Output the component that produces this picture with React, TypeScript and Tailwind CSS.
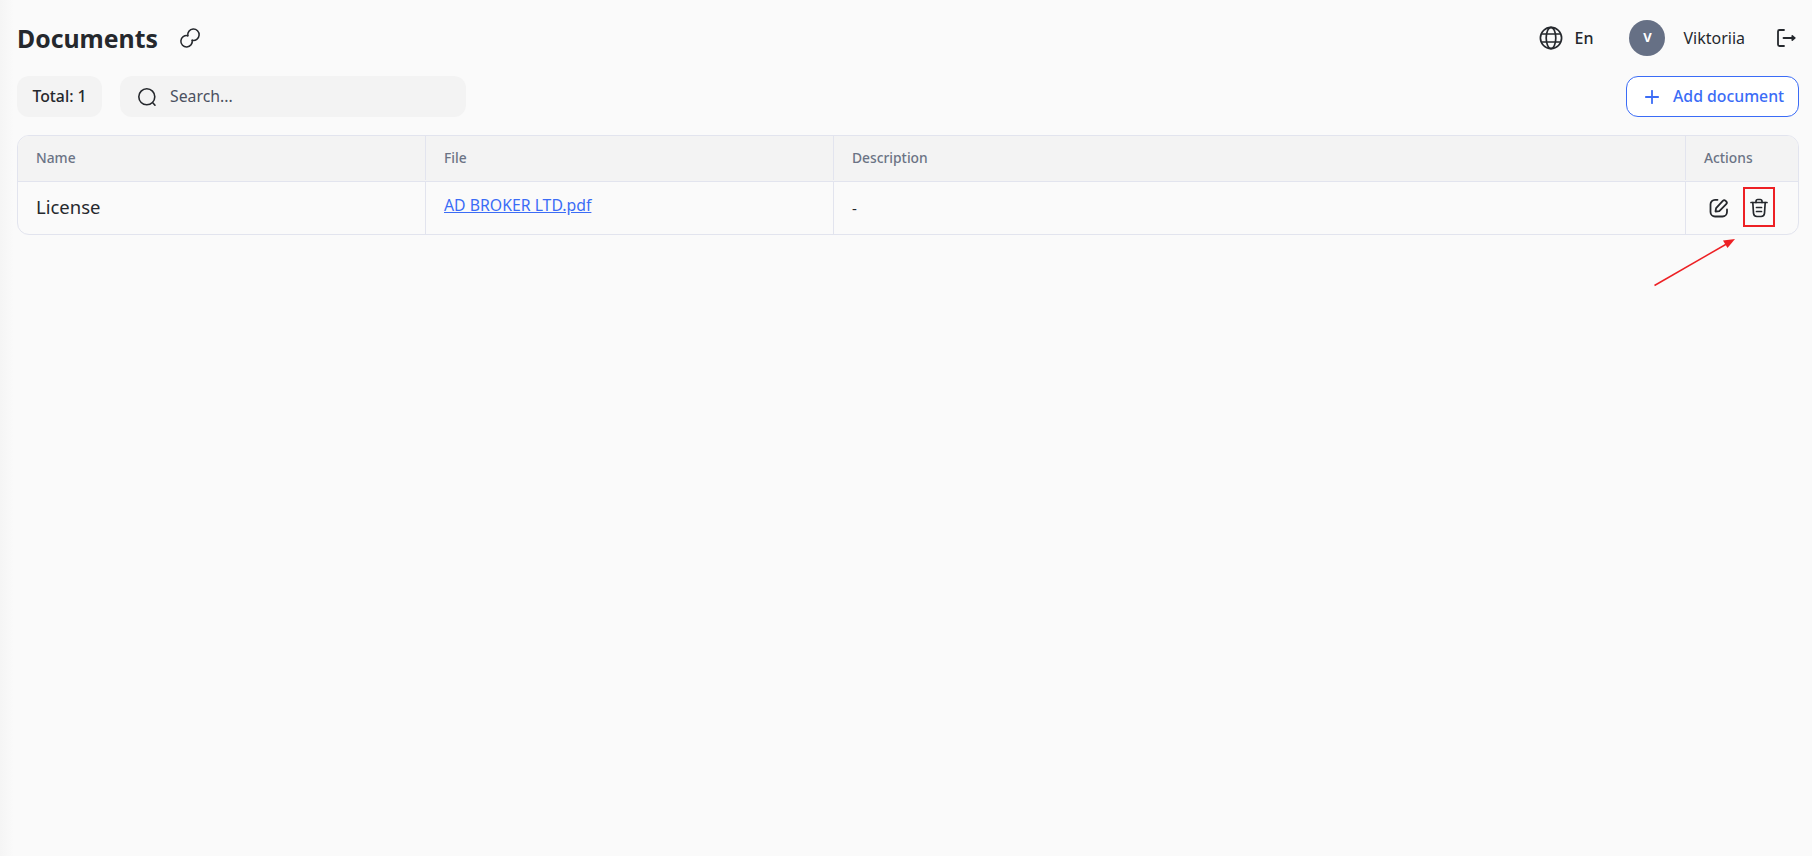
const sans = '[font-family:"Noto_Sans","Open_Sans",sans-serif]';

function LinkIcon() {
  return (
    <svg width="22" height="22" viewBox="0 0 20 20" fill="none" stroke="#25282d" strokeWidth="1.4" strokeLinecap="round">
      <path d="M8 8A5.200 5.200 0 1 1 12 12.100" />
      <path d="M12 12A5.200 5.200 0 1 1 8 7.900" />
    </svg>
  );
}

function GlobeIcon() {
  return (
    <svg width="24" height="24" viewBox="0 0 24 24" fill="none" stroke="#25282d" strokeWidth="1.7">
      <circle cx="12" cy="12" r="10.600" />
      <ellipse cx="12" cy="12" rx="4.800" ry="10.600" />
      <path d="M2.400 8h19.200M2.400 16h19.200" />
    </svg>
  );
}

function LogoutIcon() {
  return (
    <svg width="20" height="20" viewBox="0 0 20 20" fill="none" stroke="#25282d" strokeWidth="1.8" strokeLinecap="round" strokeLinejoin="round">
      <path d="M8 2H3.500A1.500 1.500 0 0 0 2 3.500v13A1.500 1.500 0 0 0 3.500 18H8" />
      <path d="M7.500 10h11" />
      <path d="m16.200 8 2.300 2-2.300 2" />
    </svg>
  );
}

function SearchIcon() {
  return (
    <svg width="20" height="20" viewBox="0 0 20 20" fill="none" stroke="#25282d" strokeWidth="1.6" strokeLinecap="round">
      <circle cx="9.800" cy="9.800" r="8" />
      <path d="m16 16 2 2.200" />
    </svg>
  );
}

function EditIcon() {
  return (
    <svg width="20" height="20" viewBox="0 0 20 20" fill="none" stroke="#25282d" strokeWidth="1.800" strokeLinecap="round" strokeLinejoin="round">
      <path d="M8.500 1.800H6A4.500 4.500 0 0 0 1.500 6.300V14A4.500 4.500 0 0 0 6 18.500h7.500A4.500 4.500 0 0 0 18 14v-2.500" />
      <path d="m6.500 13.500.6-3.400 6.700-7.300a2 2 0 0 1 2.800 0l.6.6a2 2 0 0 1 0 2.800l-6.900 6.900z" />
    </svg>
  );
}

function TrashIcon() {
  return (
    <svg width="18" height="20" viewBox="0 0 18 20" fill="none" stroke="#25282d" strokeWidth="1.700" strokeLinecap="round" strokeLinejoin="round">
      <path d="M1 4.500h16" />
      <path d="M6 4.500V3.200A1.700 1.700 0 0 1 7.700 1.500h2.600A1.700 1.700 0 0 1 12 3.200v1.300" />
      <path d="M2.800 4.500l.7 10.800a3.500 3.500 0 0 0 3.500 3.200h4a3.500 3.500 0 0 0 3.500-3.200l.7-10.800" />
      <path d="M6.500 9.500h5M6.500 13.500h5" />
    </svg>
  );
}

export default function App() {
  return (
    <div className={`${sans} relative h-[856px] w-full overflow-hidden bg-[#fafafa] pl-[17px] pr-[13px] text-[#25282d]`}>
      {/* faint shadow of the collapsed sidebar */}
      <div className="absolute inset-y-0 left-0 w-[14px] bg-gradient-to-r from-[#f5f5f5] to-transparent" />

      {/* Header */}
      <div className="relative flex h-[76px] items-center pb-[1px]">
        <h1 className="text-[24.800px] leading-8 font-bold">Documents</h1>
        <div className="ml-[21px] mt-[1px]"><LinkIcon /></div>
        <div className="ml-auto flex items-center">
          <GlobeIcon />
          <span className="ml-[11px] text-[16px] font-medium">En</span>
          <div className="ml-[36px] flex h-9 w-9 items-center justify-center rounded-full bg-[#667085] text-[13px] font-bold text-white">V</div>
          <span className="ml-[18px] text-[16px]">Viktoriia</span>
          <div className="ml-[31px] mr-[3px]"><LogoutIcon /></div>
        </div>
      </div>

      {/* Toolbar */}
      <div className="relative flex h-[41px] items-stretch">
        <div className="flex w-[85px] items-center justify-center rounded-[12px] bg-[#f3f3f3] text-[15.800px] font-medium">Total: 1</div>
        <div className="ml-[18px] flex w-[346px] items-center rounded-[12px] bg-[#f3f3f3] pl-[17px]">
          <SearchIcon />
          <span className="ml-[13px] text-[15.800px] text-[#4b5060]">Search...</span>
        </div>
        <button className="ml-auto flex w-[173px] items-center rounded-[12px] border border-[#3b6cf6] bg-white pl-[18px] text-[15.800px] font-medium text-[#3b6cf6]">
          <svg width="14" height="14" viewBox="0 0 14 14" fill="none" stroke="#3b6cf6" strokeWidth="1.800" strokeLinecap="round">
            <path d="M7 .8v12.400M.8 7h12.400" />
          </svg>
          <span className="ml-[14px]">Add document</span>
        </button>
      </div>

      {/* Table */}
      <div className="relative mt-[18px] overflow-hidden rounded-[12px] border border-[#e2e4ee]">
        <div className="grid h-[46px] grid-cols-[407px_408px_852px_1fr] items-stretch border-b border-[#e2e4ee] bg-[#f3f3f3] pb-[1px] text-[13.800px] font-medium text-[#6b7385]">
          <div className="flex items-center pl-[18px]">Name</div>
          <div className="flex items-center border-l border-[#e2e4ee] pl-[18px]">File</div>
          <div className="flex items-center border-l border-[#e2e4ee] pl-[18px]">Description</div>
          <div className="flex items-center border-l border-[#e2e4ee] pl-[18px]">Actions</div>
        </div>
        <div className="grid h-[52px] grid-cols-[407px_408px_852px_1fr] items-stretch">
          <div className="flex items-center pb-[2px] pl-[18px] text-[18.500px]">License</div>
          <div className="border-l border-[#e2e4ee] pl-[18px] pt-[11px]">
            <a className="text-[15.800px] text-[#3b6cf6] underline">AD BROKER LTD.pdf</a>
          </div>
          <div className="flex items-center border-l border-[#e2e4ee] pl-[18px] text-[15px]">-</div>
          <div className="flex items-center border-l border-[#e2e4ee] pl-[23px]">
            <EditIcon />
            <div className="ml-[21px]"><TrashIcon /></div>
          </div>
        </div>
      </div>

      {/* Annotation drawn over the screenshot */}
      <div className="absolute left-[1743px] top-[187px] h-[40px] w-[32px] border-2 border-[#ed2024]" />
      <svg className="absolute left-[1650px] top-[232px]" width="90" height="60" viewBox="0 0 90 60" fill="none">
        <path d="M4.500 53.500 80 10" stroke="#ed2024" strokeWidth="1.500" />
        <path d="M85 7 73 8.500l4.500 7.500z" fill="#ed2024" />
      </svg>
    </div>
  );
}
